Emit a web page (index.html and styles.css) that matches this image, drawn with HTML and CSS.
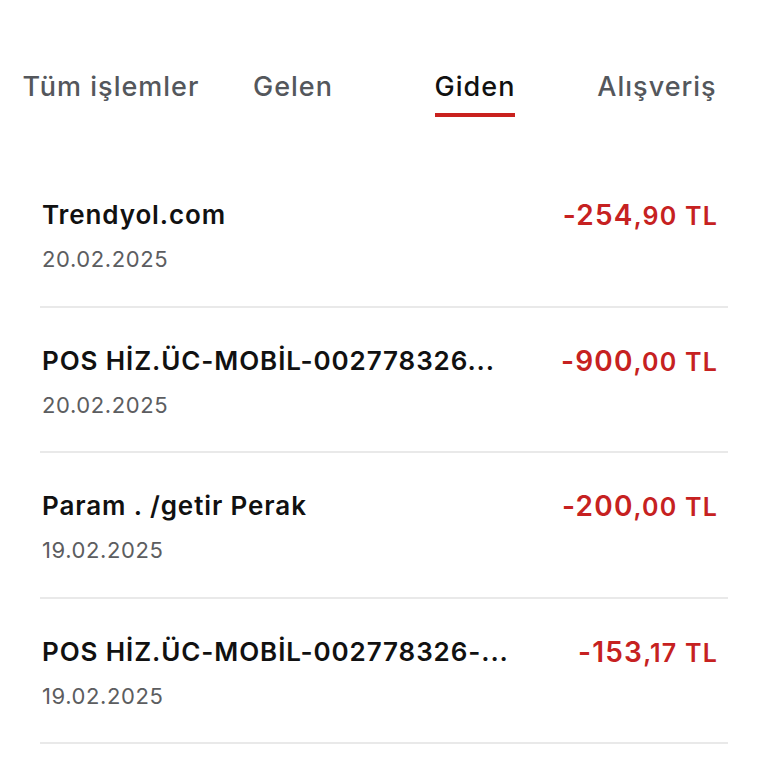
FILE: index.html
```html
<!DOCTYPE html>
<html lang="tr">
<head>
   <meta charset="UTF-8">
   <title>Hesap hareketleri</title>
   <link rel="stylesheet" href="styles.css">
</head>
<body>
<div class="tabs">
   <a class="tab" href="#">Tüm işlemler</a>
   <a class="tab" href="#">Gelen</a>
   <a class="tab tab-active" href="#">Giden</a>
   <a class="tab" href="#">Alışveriş</a>
</div>

<ul class="list">
   <li class="row">
      <div class="info">
         <div class="title">Trendyol.com</div>
         <div class="date">20.02.2025</div>
      </div>
      <div class="amount">-254<span class="small">,90 TL</span></div>
   </li>
   <li class="row">
      <div class="info">
         <div class="title">POS HİZ.ÜC-MOBİL-002778326...</div>
         <div class="date">20.02.2025</div>
      </div>
      <div class="amount">-900<span class="small">,00 TL</span></div>
   </li>
   <li class="row">
      <div class="info">
         <div class="title">Param . /getir Perak</div>
         <div class="date">19.02.2025</div>
      </div>
      <div class="amount">-200<span class="small">,00 TL</span></div>
   </li>
   <li class="row">
      <div class="info">
         <div class="title">POS HİZ.ÜC-MOBİL-002778326-...</div>
         <div class="date">19.02.2025</div>
      </div>
      <div class="amount">-153<span class="small">,17 TL</span></div>
   </li>
</ul>
</body>
</html>
```

FILE: styles.css
```css
body {
   font-family: Inter, "Noto Sans", sans-serif;
   margin: 0;
   padding: 0;
   background: #fff;
   color: #111;
}

.tabs {
   display: grid;
   grid-template-columns: repeat(4, 182px);
   padding: 70px 0 0 20px;
}

.tab {
   font: 500 27px Inter, "Liberation Sans", sans-serif;
   letter-spacing: 1px;
   color: #54575c;
   text-decoration: none;
   justify-self: center;
   padding-bottom: 9px;
   border-bottom: 4px solid transparent;
   line-height: 34px;
}

.tab-active {
   color: #111;
   border-bottom-color: #c9211e;
}

.list {
   list-style: none;
   margin: 45px 40px 0;
   padding: 0;
}

.row {
   display: flex;
   justify-content: space-between;
   align-items: flex-start;
   height: 143.5px;
   padding: 0 10px 0 2px;
   border-bottom: 2px solid #e9e9e9;
   box-sizing: content-box;
}

.info {
   padding-top: 36px;
}

.title {
   font-size: 26px;
   font-weight: 600;
   letter-spacing: 0.9px;
   line-height: 34px;
   color: #111;
}

.date {
   font-size: 22px;
   letter-spacing: 0.6px;
   line-height: 30px;
   margin-top: 12px;
   color: #5c5d60;
}

.amount {
   padding-top: 36px;
   font-size: 28px;
   font-weight: 600;
   letter-spacing: 1.2px;
   line-height: 34px;
   color: #c62121;
}

.small {
   font-size: 25px;
}
```
